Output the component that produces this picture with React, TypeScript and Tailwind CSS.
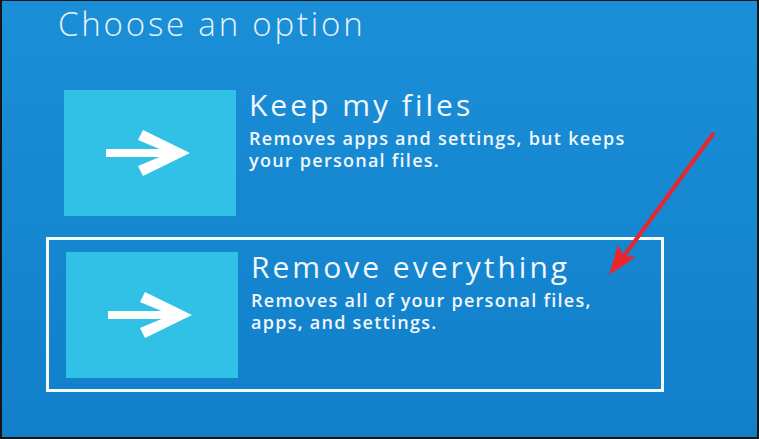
import React from "react";

const font = { fontFamily: '"Open Sans", "Noto Sans", "Liberation Sans", sans-serif' };

function ArrowTile() {
  return (
    <div className="flex h-[126px] w-[172px] shrink-0 items-center justify-center bg-[#31c0e6]">
      <svg width="84" height="46" viewBox="0 0 84 46" className="ml-[-4px]">
        <rect x="0" y="19" width="70" height="8" fill="#ffffff" />
        <polygon points="37,0 84,23 37,46 32,36 63,23 32,10" fill="#ffffff" />
      </svg>
    </div>
  );
}

function Option({
  title,
  lines,
  selected,
  className,
}: {
  title: string;
  lines: string[];
  selected?: boolean;
  className: string;
}) {
  return (
    <div
      className={`flex w-[618px] border-[3px] pl-[17px] pt-[12px] pb-[11px] ${
        selected ? "border-[#f4f9fc]" : "border-transparent"
      } ${className}`}
    >
      <ArrowTile />
      <div className="ml-[13px] flex flex-col text-[#f1f7fb]">
        <div className="text-[30px] leading-[30px] font-normal tracking-[0.1em]">{title}</div>
        <div className="mt-[7px] text-[18px] leading-[22px] font-semibold tracking-[0.07em]">
          {lines.map((l) => (
            <div key={l}>{l}</div>
          ))}
        </div>
      </div>
    </div>
  );
}

export default function App() {
  return (
    <div
      style={font}
      className="relative h-[439px] w-[759px] overflow-hidden border-x-2 border-t border-b-2 border-[#161616] bg-linear-to-b from-[#1a8fd7] to-[#127fcb]"
    >
      <h1 className="ml-[56px] mt-[3px] text-[33px] leading-[40px] font-light tracking-[0.085em] text-[#e9f2f9]">
        Choose an option
      </h1>
      <Option
        className="ml-[42px] mt-[31px]"
        title="Keep my files"
        lines={["Removes apps and settings, but keeps", "your personal files."]}
      />
      <Option
        className="ml-[44px] mt-[7px]"
        selected
        title="Remove everything"
        lines={["Removes all of your personal files,", "apps, and settings."]}
      />
      <svg
        className="pointer-events-none absolute left-[-2px] top-[-1px]"
        width="759"
        height="439"
        viewBox="0 0 759 439"
      >
        <line x1="713" y1="134" x2="624" y2="256" stroke="#e8262c" strokeWidth="4" strokeLinecap="round" />
        <polygon points="609,275 618,245 624,256 636,257" fill="#e8262c" />
      </svg>
    </div>
  );
}
